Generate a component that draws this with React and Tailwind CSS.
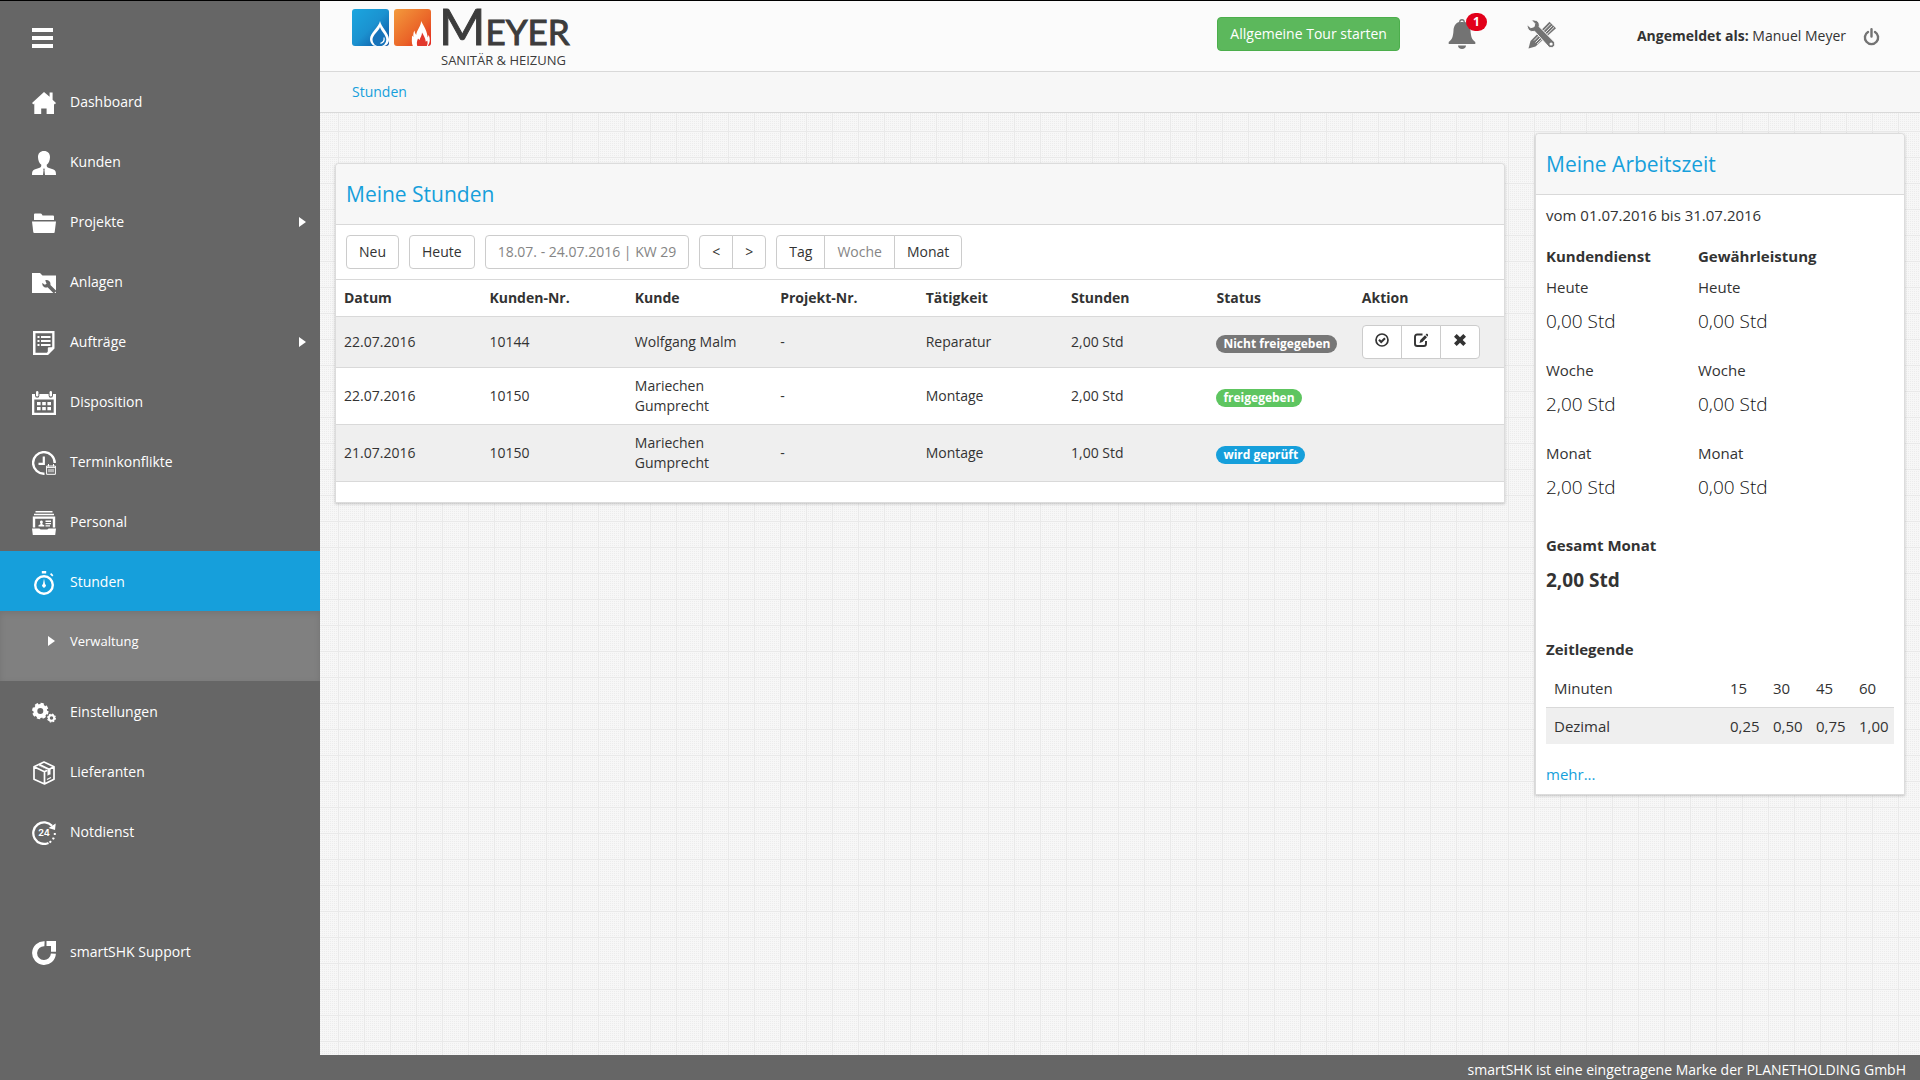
import React from "react";

const ICONS = {
  home: (
    <path d="M12 1 0 12l1.400 1.400.9-.8V23h6.900v-5.600h5.400V23H22V12.600l.7.8L24 12l-3.400-3.300V1.500h-3v4.300z" />
  ),
  user: (
    <path d="M12 0C8.200 0 5.900 2.400 6 6.200c.1 3.200 1.300 6 3.300 7.500 0 1.700-.2 2.500-1.600 3L2.500 18.500C.6 19.200 0 20.500 0 24h11l.6-5.200-.8-1h2.400l-.8 1L13 24h11c0-3.500-.6-4.800-2.500-5.500l-5.200-1.800c-1.400-.5-1.600-1.300-1.600-3 2-1.500 3.200-4.300 3.300-7.500C18.100 2.400 15.800 0 12 0z" />
  ),
  folder: (
    <>
      <path d="M2 3.500Q2 2.500 3 2.500h5.500q1 0 1.500 1L10.500 4.500H21q1 0 1 1V9H2z" />
      <path d="M0 10.500h24l-1.300 10.700q-.1.800-1 .8H2.300q-.9 0-1-.8z" />
    </>
  ),
  folderTool: (
    <>
      <path d="M0 2h8l2.500 2.500H24V22H0z" />
      <path
        d="M13.200 9.300a4 4 0 0 1 5.200 4.600l6 6.100-2.600 2.600-6.200-6.300A4 4 0 0 1 10.300 12l2.600 1.800 1.700-1z"
        fill="#666"
      />
    </>
  ),
  order: (
    <>
      <path d="M1 0h21.500v17.500L16 24H1zM3.500 2.300v19.400h11.300c2-.6.300-4.700 1.400-5.200.8-.4 3.200.2 4-.5V2.300z" fillRule="evenodd" />
      <path d="M5.500 5h2v2h-2zM9 5h9.500v2H9zM5.500 9h2v2h-2zM9 9h9.500v2H9zM5.500 13h2v2h-2zM9 13h9.500v2H9z" />
    </>
  ),
  calendar: (
    <>
      <path
        fillRule="evenodd"
        d="M0 3h3v1.500a2.200 2.200 0 0 0 4.400 0V3h9.200v1.500a2.200 2.200 0 0 0 4.400 0V3h3v21H0zM2.300 8.500v13.200h19.400V8.500z"
      />
      <rect x="4" y="0" width="2.400" height="5.500" rx="1.200" />
      <rect x="17.600" y="0" width="2.400" height="5.500" rx="1.200" />
      <path d="M5 11h3.600v3.300H5zM10.200 11h3.600v3.300h-3.600zM15.400 11H19v3.300h-3.600zM5 16h3.600v3.300H5zM10.200 16h3.600v3.300h-3.600zM15.400 16H19v3.300h-3.600z" />
    </>
  ),
  conflict: (
    <>
      <path d="M12.500 22.700A10.800 10.800 0 1 1 22.700 12" fill="none" stroke="currentColor" strokeWidth="2.400" />
      <path d="M11.800 5.500v7.300H6.500" fill="none" stroke="currentColor" strokeWidth="2.200" />
      <path d="M14.600 15h8.800v8.300h-8.800zM16.500 13v2.500M21.500 13v2.500M17 17.800v3.500M19 17.800v3.500M21 17.800v3.500M14.600 16.400h8.800" fill="none" stroke="currentColor" strokeWidth="1" />
    </>
  ),
  staff: (
    <>
      <path d="M3.500 0h17v1.500h-17zM2 2.700h20v1.600H2z" />
      <path fillRule="evenodd" d="M.8 5.500h22.400v11h-2.400V7.800H3.200v8.700H.8z" />
      <path d="M6.500 15.500v-1.200l2-1v-.8c-.8-.9-.8-3 .9-3s1.700 2.100.9 3v.8l2 1v1.200zM13.500 9.500H19V11h-5.500zM13.500 12H19v1.300h-5.500zM13.500 14.300H18v1.200h-4.500z" />
      <path d="M0 17.500h7.500q.6 1 1.500 1h6q.9 0 1.500-1H24L23.200 24H.8z" />
    </>
  ),
  stopwatch: (
    <>
      <circle cx="12" cy="14" r="8.800" fill="none" stroke="currentColor" strokeWidth="2.400" />
      <path d="M9.800 0h4.400v2.400H9.800zM18 3.200l1.200-1.200 2.200 2.200-1.200 1.200zM12 7.500l1 5.500a1.900 1.900 0 1 1-2 0z" />
    </>
  ),
  gears: (
    <>
      <circle cx="8.300" cy="10" r="5" fill="none" stroke="currentColor" strokeWidth="4" />
      <circle cx="8.300" cy="10" r="7.300" fill="none" stroke="currentColor" strokeWidth="1.900" strokeDasharray="3.400 2.330" />
      <circle cx="19.500" cy="17" r="2.700" fill="none" stroke="currentColor" strokeWidth="1.900" />
      <circle cx="19.500" cy="17" r="3.900" fill="none" stroke="currentColor" strokeWidth="1.100" strokeDasharray="1.800 1.260" />
    </>
  ),
  box: (
    <>
      <path d="M12 1 22 5.800v12.400L12.500 23 2 18.200V5.800zM2 5.800l10.500 5L22 5.800M12.500 10.800V23" fill="none" stroke="currentColor" strokeWidth="1.700" strokeLinejoin="round" />
      <path d="m5 4.300 10.500 5v5.500l1.500-1 1.500-.2V8L8.200 2.900z" />
      <path d="m6 4.500 10 4.700" fill="none" stroke="#666" strokeWidth=".7" />
      <path d="M15 18.500l4-2" fill="none" stroke="currentColor" strokeWidth="1.200" />
    </>
  ),
  emergency: (
    <>
      <path d="M16.500 22A10.800 10.800 0 1 1 20 4.800" fill="none" stroke="currentColor" strokeWidth="2.300" />
      <path d="M23.700 2.500 23 9l-6.500-2z" />
      <path d="M21.800 12h2v2h-2zM20.800 16.200l2 .7-.9 1.900-1.900-.8zM18.200 19.500l1.600 1.300-1.400 1.500-1.600-1.400z" />
      <text x="12" y="15.200" textAnchor="middle" className="text-[9px] font-bold [font-family:Inter,sans-serif]">24</text>
    </>
  ),
  support: (
    <>
      <path d="M12.500 2.700A9.400 9.400 0 1 0 21.400 12.600" fill="none" stroke="currentColor" strokeWidth="5" />
      <path d="M14.500 0H24v10.800h-5V5h-4.500z" />
    </>
  ),
};

function NavIcon({ name }) {
  return (
    <svg viewBox="0 0 24 24" className="mt-1 size-6 shrink-0" fill="currentColor" aria-hidden="true">
      {ICONS[name]}
    </svg>
  );
}

function Triangle() {
  return (
    <svg viewBox="0 0 7 10" className="h-[10px] w-[7px] shrink-0" fill="currentColor" aria-hidden="true">
      <path d="M0 0l7 5-7 5z" />
    </svg>
  );
}

const NAV = [
  { label: "Dashboard", icon: "home" },
  { label: "Kunden", icon: "user" },
  { label: "Projekte", icon: "folder", more: true },
  { label: "Anlagen", icon: "folderTool" },
  { label: "Aufträge", icon: "order", more: true },
  { label: "Disposition", icon: "calendar" },
  { label: "Terminkonflikte", icon: "conflict" },
  { label: "Personal", icon: "staff" },
  { label: "Stunden", icon: "stopwatch", active: true, children: ["Verwaltung"] },
  { label: "Einstellungen", icon: "gears" },
  { label: "Lieferanten", icon: "box" },
  { label: "Notdienst", icon: "emergency" },
];

function NavItem({ item }) {
  return (
    <li>
      <a
        href="#"
        className={`flex h-[60px] items-center gap-[14px] pr-[14px] pl-8 ${item.active ? "bg-[#169fdb]" : ""}`}
      >
        <NavIcon name={item.icon} />
        <span className="flex grow items-center justify-between pt-[2px]">
          {item.label}
          {item.more && <Triangle />}
        </span>
      </a>
      {item.children && (
        <ul className="h-[70px] bg-[#808080] pt-5 shadow-[inset_0_2px_6px_rgba(0,0,0,0.1)]">
          {item.children.map((c) => (
            <li key={c}>
              <a href="#" className="flex items-center gap-[15px] pl-12 text-[13px] leading-5">
                <Triangle />
                {c}
              </a>
            </li>
          ))}
        </ul>
      )}
    </li>
  );
}

function Sidebar() {
  return (
    <nav className="w-80 shrink-0 bg-[#666] text-white">
      <div className="h-[70px] pt-[27px] pl-8">
        <button type="button" aria-label="Menü" className="flex flex-col gap-1">
          <span className="h-1 w-[21px] bg-white" />
          <span className="h-1 w-[21px] bg-white" />
          <span className="h-1 w-[21px] bg-white" />
        </button>
      </div>
      <ul>
        {NAV.map((n) => (
          <NavItem key={n.label} item={n} />
        ))}
      </ul>
      <ul className="mt-[60px]">
        <NavItem item={{ label: "smartSHK Support", icon: "support" }} />
      </ul>
    </nav>
  );
}

function Logo() {
  return (
    <a href="#" aria-label="Meyer Sanitär & Heizung" className="flex gap-2 text-[#3c3c3c]">
      <svg viewBox="0 0 79 37" className="h-[37px] w-[79px]" aria-hidden="true">
        <defs>
          <linearGradient id="water" x1="0" y1="0" x2="1" y2="1">
            <stop offset="0" stopColor="#1ba6df" />
            <stop offset=".5" stopColor="#1b92d0" />
            <stop offset="1" stopColor="#0d4f9e" />
          </linearGradient>
          <linearGradient id="fire" x1="0" y1="0" x2="1" y2="1">
            <stop offset="0" stopColor="#f39a3c" />
            <stop offset=".6" stopColor="#ea6428" />
            <stop offset="1" stopColor="#e2231f" />
          </linearGradient>
        </defs>
        <rect width="37" height="37" rx="3" fill="url(#water)" />
        <path d="M28 12c-1 6-10 12-10 18 0 3.500 2.500 7 5.500 7h8.500c3-.5 5.300-3.500 5-7-.4-6-7.800-12-9-18z" fill="#fff" />
        <path d="M28 18c-1.500 4.500-7.500 8-7.500 12.800a6.700 6.300 0 0 0 13.800 0c0-4.800-5.100-8.300-6.300-12.800z" fill="#1673ba" />
        <path d="M32 28.500c.6 3-.5 5-3.500 5.800" fill="none" stroke="#fff" strokeWidth="1.200" />
        <rect x="42" width="37" height="37" rx="3" fill="url(#fire)" />
        <path d="M69 12c.5 5-4.500 9-4.800 14l-1.200-2-.6-2.500c-1.200 2.500-1.200 4.500-1 6.500L60 26.500c0 4-.7 7 .8 10.500h15c2.500-3.500 2.500-7 1-11l-1.200 2.500c-.2-6-3.600-11-6.600-16.500z" fill="#fff" />
        <path d="M70 23.500c.2 3-2 5-2.400 7.500L66 29.500c-1.200 2.500-1.500 5-.7 7.500h9.500c1-2 1-3.500.4-5.500l-1.400 1.200c-.4-3.700-2.300-6.700-3.800-9.200z" fill="#e2382c" />
      </svg>
      <span className="flex flex-col">
        <span className="flex h-[37px] items-baseline [-webkit-text-stroke:1px_#3c3c3c] [font-family:Lato,sans-serif]">
          <span className="text-[50px] leading-[35px]">M</span>
          <span className="text-[35px] leading-[35px]">EYER</span>
        </span>
        <span className="mt-1 pl-[2px] text-[13px] leading-5">SANITÄR &amp; HEIZUNG</span>
      </span>
    </a>
  );
}

function Header() {
  return (
    <header className="flex h-[71px] items-start border-b border-[#d9d9d9] bg-[#fbfbfb] pt-2 pr-10 pl-8">
      <Logo />
      <div className="ml-auto flex items-center pt-2">
        <button type="button" className="h-[34px] rounded-[4px] border border-[#4cae4c] bg-[#5cb85c] px-3 leading-5 text-white">
          Allgemeine Tour starten
        </button>
        <button type="button" aria-label="Benachrichtigungen" className="relative ml-12 h-[30px] w-[28px] text-[#737373]">
          <svg viewBox="0 0 28 30" className="h-[30px] w-[28px]" fill="currentColor" aria-hidden="true">
            <path
              fillRule="evenodd"
              d="M14 0c1.800 0 2.900 1.200 2.900 3.100 4 1.300 5.300 4.600 5.600 8.500.4 6 1.400 9.300 4.800 11.400V25H.7v-2c3.400-2.100 4.400-5.400 4.800-11.400.3-3.900 1.600-7.200 5.600-8.500C11.100 1.200 12.200 0 14 0zm0 1.400c-1 0-1.600.7-1.500 1.800.9-.2 2.100-.2 3 0 .1-1.100-.5-1.800-1.500-1.800z"
            />
            <path d="M10 26.500h8c0 2-1.600 3.500-4 3.500s-4-1.500-4-3.500z" />
          </svg>
          <span className="absolute -top-[6px] left-[18px] h-[18px] w-[21px] rounded-full bg-[#e2001a] text-[12px] font-bold leading-[18px] text-white">
            1
          </span>
        </button>
        <button type="button" aria-label="Werkzeuge" className="ml-[50px] text-[#737373]">
          <svg viewBox="0 0 31 30" className="h-[30px] w-[31px]" fill="currentColor" aria-hidden="true">
            <path d="M23.500 2.800 30 9.300 9.500 27.500l-7 2 2-7.500z" />
            <path d="M24.500 4.800 8 21.500M26.300 6.600 9.500 23.500M28 8.300 11 25.200" stroke="#fbfbfb" strokeWidth=".9" />
            <path
              d="M5.500 1.200c5-1.200 8.700 2 7.700 6.500L27.800 22.400c1.500 1.700 1.200 4-.2 5.300s-3.700 1.500-5.200-.2L8.600 12.200C4.500 13.600.8 10.500 1.200 5.700l3.400 3 3.500-1 .7-3.200z"
              stroke="#fbfbfb"
              strokeWidth="1"
            />
            <circle cx="25.100" cy="25" r="1.600" fill="#fbfbfb" />
          </svg>
        </button>
        <span className="ml-20 pt-1 leading-5">
          <b>Angemeldet als:</b> Manuel Meyer
        </span>
        <button type="button" aria-label="Abmelden" className="ml-[17px] pt-[6px] text-[#737373]">
          <svg viewBox="0 0 17 18" className="h-[18px] w-[17px]" fill="none" stroke="currentColor" strokeWidth="2.400" strokeLinecap="round" aria-hidden="true">
            <path d="M5 3.900a6.600 6.600 0 1 0 7 0M8.500 1.300v7.200" />
          </svg>
        </button>
      </div>
    </header>
  );
}

function Card({ title, children }) {
  return (
    <section className="rounded-t-[4px] border border-[#dcdcdc] bg-white shadow-[0_1px_3px_rgba(0,0,0,0.2)]">
      <h2 className="rounded-t-[4px] border-b border-[#d9d9d9] bg-[#f7f7f7] px-[10px] py-[15px] text-[21px] leading-[30px] text-[#169fdb]">
        {title}
      </h2>
      {children}
    </section>
  );
}

const BTN = "h-[34px] border border-[#ccc] bg-white px-3 leading-5";

function Toolbar() {
  return (
    <div className="flex flex-wrap gap-[10px] px-[10px] py-[10px]">
      <button type="button" className={`${BTN} rounded-[4px]`}>Neu</button>
      <button type="button" className={`${BTN} rounded-[4px]`}>Heute</button>
      <button type="button" disabled className={`${BTN} rounded-[4px] text-[#858585]`}>18.07. - 24.07.2016 | KW 29</button>
      <div className="flex">
        <button type="button" aria-label="Zurück" className={`${BTN} rounded-l-[4px]`}>&lt;</button>
        <button type="button" aria-label="Weiter" className={`${BTN} -ml-px rounded-r-[4px]`}>&gt;</button>
      </div>
      <div className="flex">
        <button type="button" className={`${BTN} rounded-l-[4px]`}>Tag</button>
        <button type="button" disabled className={`${BTN} -ml-px text-[#858585]`}>Woche</button>
        <button type="button" className={`${BTN} -ml-px rounded-r-[4px]`}>Monat</button>
      </div>
    </div>
  );
}

const COLUMNS = ["Datum", "Kunden-Nr.", "Kunde", "Projekt-Nr.", "Tätigkeit", "Stunden", "Status", "Aktion"];

const ROWS = [
  { cells: ["22.07.2016", "10144", "Wolfgang Malm", "-", "Reparatur", "2,00 Std"], status: "Nicht freigegeben", color: "bg-[#777]", actions: true },
  { cells: ["22.07.2016", "10150", "Mariechen Gumprecht", "-", "Montage", "2,00 Std"], status: "freigegeben", color: "bg-[#5ec560]" },
  { cells: ["21.07.2016", "10150", "Mariechen Gumprecht", "-", "Montage", "1,00 Std"], status: "wird geprüft", color: "bg-[#169fdb]" },
];

const ACTIONS = [
  {
    label: "Freigeben",
    shape: "rounded-l-[4px]",
    icon: (
      <>
        <circle cx="7" cy="7" r="6" fill="none" stroke="currentColor" strokeWidth="1.700" />
        <path d="m4 6.800 2.200 2.300L10 5.200" fill="none" stroke="currentColor" strokeWidth="2.100" />
      </>
    ),
  },
  {
    label: "Bearbeiten",
    shape: "-ml-px",
    icon: (
      <>
        <path d="M8.500 1.500H3.200Q1 1.500 1 3.700v7Q1 13 3.200 13h6.600q2.200 0 2.200-2.300V8" fill="none" stroke="currentColor" strokeWidth="1.900" />
        <path d="m5.500 10 .8-3L11 2.300l2 2L8.400 9zM11.600 1.700l1-1q.3-.3.600 0l1.200 1.200q.3.300 0 .6l-.9.900z" />
      </>
    ),
  },
  {
    label: "Löschen",
    shape: "-ml-px rounded-r-[4px]",
    icon: <path d="M3.700 1 7 4.300 10.300 1 13 3.700 9.700 7l3.300 3.300-2.700 2.700L7 9.700 3.700 13 1 10.300 4.300 7 1 3.700z" />,
  },
];

function HoursTable() {
  return (
    <table className="mb-5 w-full table-fixed border-collapse leading-5">
      <thead>
        <tr className="border-y border-[#d9d9d9]">
          {COLUMNS.map((c) => (
            <th key={c} className="w-[12.45%] p-2 text-left font-bold last:w-auto">{c}</th>
          ))}
        </tr>
      </thead>
      <tbody>
        {ROWS.map((r, i) => (
          <tr key={i} className="border-b border-[#d9d9d9] odd:bg-[#efefef]">
            {r.cells.map((c, j) => (
              <td key={j} className="p-2">{c}</td>
            ))}
            <td className="px-2 pt-[2px]">
              <span className={`inline-block h-[18px] rounded-full px-[7px] align-middle text-[12px] font-bold leading-[18px] whitespace-nowrap text-white ${r.color}`}>
                {r.status}
              </span>
            </td>
            <td className="p-2">
              {r.actions && (
                <div className="flex">
                  {ACTIONS.map((a) => (
                    <button key={a.label} type="button" aria-label={a.label} className={`${BTN} pb-1 ${a.shape}`}>
                      <svg viewBox="0 0 14 14" className="size-[14px]" fill="currentColor" aria-hidden="true">{a.icon}</svg>
                    </button>
                  ))}
                </div>
              )}
            </td>
          </tr>
        ))}
      </tbody>
    </table>
  );
}

const TIMES = [
  { title: "Kundendienst", values: [["Heute", "0,00 Std"], ["Woche", "2,00 Std"], ["Monat", "2,00 Std"]] },
  { title: "Gewährleistung", values: [["Heute", "0,00 Std"], ["Woche", "0,00 Std"], ["Monat", "0,00 Std"]] },
];

function WorkTime() {
  return (
    <Card title="Meine Arbeitszeit">
      <div className="p-[10px] text-[15px] leading-5">
        <p>vom 01.07.2016 bis 31.07.2016</p>
        <div className="mt-[21px] flex">
          {TIMES.map((t) => (
            <div key={t.title} className="w-[152px]">
              <h3 className="mb-[11px] font-bold">{t.title}</h3>
              <dl className="flex flex-col gap-[29px]">
                {t.values.map(([k, v]) => (
                  <div key={k}>
                    <dt>{k}</dt>
                    <dd className="mt-[14px] text-[19px] font-light leading-5 text-[#111]">{v}</dd>
                  </div>
                ))}
              </dl>
            </div>
          ))}
        </div>
        <h3 className="mt-[38px] font-bold">Gesamt Monat</h3>
        <p className="mt-[15px] text-[19px] font-bold leading-5">2,00 Std</p>
        <h3 className="mt-[49px] font-bold">Zeitlegende</h3>
        <table className="mt-[10px] w-full border-collapse">
          <tbody>
            <tr>
              <th className="p-2 text-left font-normal">Minuten</th>
              {["15", "30", "45", "60"].map((m) => (
                <td key={m} className="w-[43px] py-[9px] pl-2">{m}</td>
              ))}
            </tr>
            <tr className="border-t border-[#d9d9d9] bg-[#efefef]">
              <th className="p-2 text-left font-normal">Dezimal</th>
              {["0,25", "0,50", "0,75", "1,00"].map((m) => (
                <td key={m} className="py-2 pl-2">{m}</td>
              ))}
            </tr>
          </tbody>
        </table>
        <a href="#" className="mt-5 block text-[#169fdb]">mehr...</a>
      </div>
    </Card>
  );
}

export default function App() {
  return (
    <div className="flex min-h-screen flex-col border-t border-black bg-[#666] text-sm text-[#333] [font-family:'Open_Sans',sans-serif]">
      <div className="flex grow">
        <Sidebar />
        <div className="flex min-w-0 grow flex-col">
          <Header />
          <nav aria-label="Brotkrumen" className="h-[41px] border-b border-[#d9d9d9] bg-[#f7f7f7] px-8 py-[10px] leading-5">
            <a href="#" className="text-[#169fdb]">Stunden</a>
          </nav>
          <main className="flex grow items-start bg-[#f7f7f7] bg-[linear-gradient(to_right,#e9e9e9_1px,transparent_1px),linear-gradient(#e9e9e9_1px,transparent_1px),conic-gradient(from_0deg_at_1px_1px,transparent_75%,#ececec_0)] bg-[size:26px_26px,26px_26px,2px_2px] bg-[position:18px_18px] pt-5">
            <div className="w-3/4 px-[15px] pt-[30px]">
              <Card title="Meine Stunden">
                <Toolbar />
                <HoursTable />
              </Card>
            </div>
            <div className="w-1/4 px-[15px]">
              <WorkTime />
            </div>
          </main>
        </div>
      </div>
      <footer className="h-[25px] px-[14px] pt-[5px] text-right leading-5 text-white">
        smartSHK ist eine eingetragene Marke der PLANETHOLDING GmbH
      </footer>
    </div>
  );
}
